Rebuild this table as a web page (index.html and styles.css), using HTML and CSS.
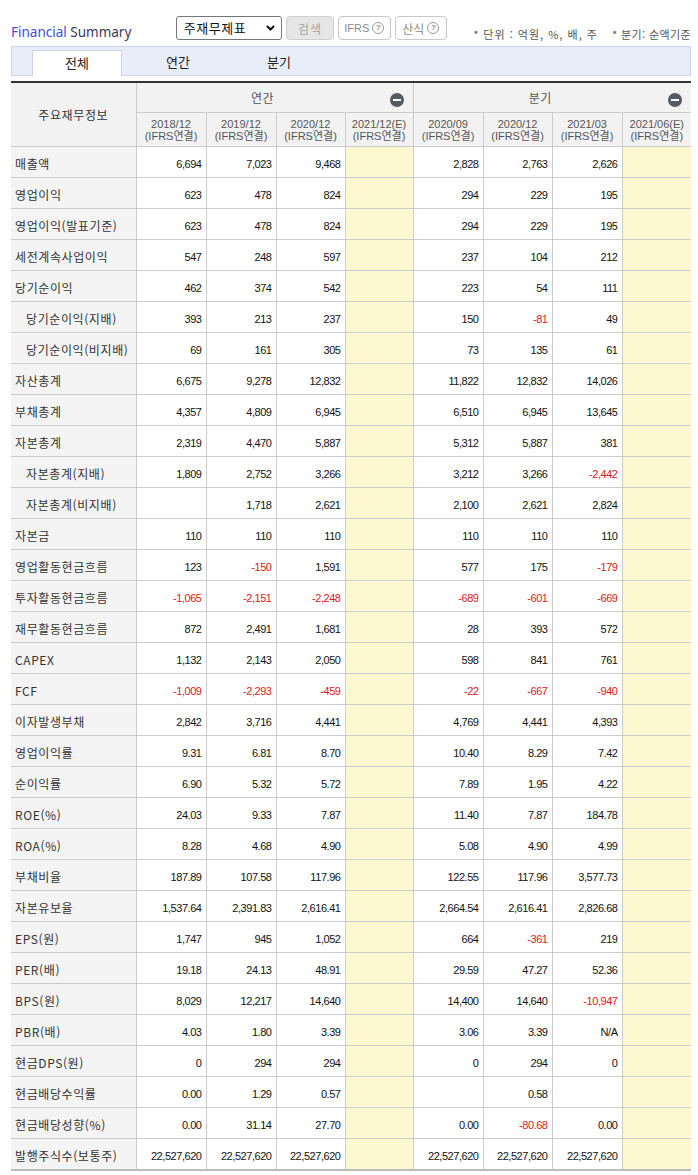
FILE: index.html
```html
<!DOCTYPE html>
<html lang="ko">
<head>
<meta charset="utf-8">
<title>Financial Summary</title>
<link rel="stylesheet" href="styles.css">
</head>
<body>
<div class="wrap">
  <div class="top">
    <h2 class="title"><span class="t-blue">Financial</span> Summary</h2>
    <div class="select">주재무제표<svg class="chev" width="9" height="6" viewBox="0 0 9 6"><polyline points="1,1 4.5,4.5 8,1" fill="none" stroke="#111" stroke-width="2"/></svg></div>
    <button class="btn btn-gray">검색</button>
    <button class="btn btn-w">IFRS <span class="q">?</span></button>
    <button class="btn btn-w btn-ko">산식 <span class="q">?</span></button>
    <span class="unit u1">* 단위 : 억원, %, 배, 주</span>
    <span class="unit u2">* 분기: 순액기준</span>
  </div>

  <div class="tabs">
    <div class="tab on">전체</div>
    <div class="tab">연간</div>
    <div class="tab">분기</div>
  </div>

  <table class="fs">
    <colgroup>
      <col style="width:125px"><col style="width:70px"><col style="width:70px"><col style="width:69px"><col style="width:68px"><col style="width:70px"><col style="width:69px"><col style="width:70px"><col style="width:69px">
    </colgroup>
    <thead>
      <tr class="h1">
        <th rowspan="2" class="hlabel">주요재무정보</th>
        <th colspan="4" class="grp">연간<span class="minus"></span></th>
        <th colspan="4" class="grp">분기<span class="minus"></span></th>
      </tr>
      <tr class="h2">
        <th>2018/12<br>(IFRS연결)</th>
        <th>2019/12<br>(IFRS연결)</th>
        <th>2020/12<br>(IFRS연결)</th>
        <th>2021/12(E)<br>(IFRS연결)</th>
        <th>2020/09<br>(IFRS연결)</th>
        <th>2020/12<br>(IFRS연결)</th>
        <th>2021/03<br>(IFRS연결)</th>
        <th>2021/06(E)<br>(IFRS연결)</th>
      </tr>
    </thead>
    <tbody>
      <tr><th>매출액</th><td>6,694</td><td>7,023</td><td>9,468</td><td class="e"></td><td>2,828</td><td>2,763</td><td>2,626</td><td class="e"></td></tr>
      <tr><th>영업이익</th><td>623</td><td>478</td><td>824</td><td class="e"></td><td>294</td><td>229</td><td>195</td><td class="e"></td></tr>
      <tr><th>영업이익(발표기준)</th><td>623</td><td>478</td><td>824</td><td class="e"></td><td>294</td><td>229</td><td>195</td><td class="e"></td></tr>
      <tr><th>세전계속사업이익</th><td>547</td><td>248</td><td>597</td><td class="e"></td><td>237</td><td>104</td><td>212</td><td class="e"></td></tr>
      <tr><th>당기순이익</th><td>462</td><td>374</td><td>542</td><td class="e"></td><td>223</td><td>54</td><td>111</td><td class="e"></td></tr>
      <tr><th class="sub">당기순이익(지배)</th><td>393</td><td>213</td><td>237</td><td class="e"></td><td>150</td><td class="neg">-81</td><td>49</td><td class="e"></td></tr>
      <tr><th class="sub">당기순이익(비지배)</th><td>69</td><td>161</td><td>305</td><td class="e"></td><td>73</td><td>135</td><td>61</td><td class="e"></td></tr>
      <tr><th>자산총계</th><td>6,675</td><td>9,278</td><td>12,832</td><td class="e"></td><td>11,822</td><td>12,832</td><td>14,026</td><td class="e"></td></tr>
      <tr><th>부채총계</th><td>4,357</td><td>4,809</td><td>6,945</td><td class="e"></td><td>6,510</td><td>6,945</td><td>13,645</td><td class="e"></td></tr>
      <tr><th>자본총계</th><td>2,319</td><td>4,470</td><td>5,887</td><td class="e"></td><td>5,312</td><td>5,887</td><td>381</td><td class="e"></td></tr>
      <tr><th class="sub">자본총계(지배)</th><td>1,809</td><td>2,752</td><td>3,266</td><td class="e"></td><td>3,212</td><td>3,266</td><td class="neg">-2,442</td><td class="e"></td></tr>
      <tr><th class="sub">자본총계(비지배)</th><td></td><td>1,718</td><td>2,621</td><td class="e"></td><td>2,100</td><td>2,621</td><td>2,824</td><td class="e"></td></tr>
      <tr><th>자본금</th><td>110</td><td>110</td><td>110</td><td class="e"></td><td>110</td><td>110</td><td>110</td><td class="e"></td></tr>
      <tr><th>영업활동현금흐름</th><td>123</td><td class="neg">-150</td><td>1,591</td><td class="e"></td><td>577</td><td>175</td><td class="neg">-179</td><td class="e"></td></tr>
      <tr><th>투자활동현금흐름</th><td class="neg">-1,065</td><td class="neg">-2,151</td><td class="neg">-2,248</td><td class="e"></td><td class="neg">-689</td><td class="neg">-601</td><td class="neg">-669</td><td class="e"></td></tr>
      <tr><th>재무활동현금흐름</th><td>872</td><td>2,491</td><td>1,681</td><td class="e"></td><td>28</td><td>393</td><td>572</td><td class="e"></td></tr>
      <tr><th>CAPEX</th><td>1,132</td><td>2,143</td><td>2,050</td><td class="e"></td><td>598</td><td>841</td><td>761</td><td class="e"></td></tr>
      <tr><th>FCF</th><td class="neg">-1,009</td><td class="neg">-2,293</td><td class="neg">-459</td><td class="e"></td><td class="neg">-22</td><td class="neg">-667</td><td class="neg">-940</td><td class="e"></td></tr>
      <tr><th>이자발생부채</th><td>2,842</td><td>3,716</td><td>4,441</td><td class="e"></td><td>4,769</td><td>4,441</td><td>4,393</td><td class="e"></td></tr>
      <tr><th>영업이익률</th><td>9.31</td><td>6.81</td><td>8.70</td><td class="e"></td><td>10.40</td><td>8.29</td><td>7.42</td><td class="e"></td></tr>
      <tr><th>순이익률</th><td>6.90</td><td>5.32</td><td>5.72</td><td class="e"></td><td>7.89</td><td>1.95</td><td>4.22</td><td class="e"></td></tr>
      <tr><th>ROE(%)</th><td>24.03</td><td>9.33</td><td>7.87</td><td class="e"></td><td>11.40</td><td>7.87</td><td>184.78</td><td class="e"></td></tr>
      <tr><th>ROA(%)</th><td>8.28</td><td>4.68</td><td>4.90</td><td class="e"></td><td>5.08</td><td>4.90</td><td>4.99</td><td class="e"></td></tr>
      <tr><th>부채비율</th><td>187.89</td><td>107.58</td><td>117.96</td><td class="e"></td><td>122.55</td><td>117.96</td><td>3,577.73</td><td class="e"></td></tr>
      <tr><th>자본유보율</th><td>1,537.64</td><td>2,391.83</td><td>2,616.41</td><td class="e"></td><td>2,664.54</td><td>2,616.41</td><td>2,826.68</td><td class="e"></td></tr>
      <tr><th>EPS(원)</th><td>1,747</td><td>945</td><td>1,052</td><td class="e"></td><td>664</td><td class="neg">-361</td><td>219</td><td class="e"></td></tr>
      <tr><th>PER(배)</th><td>19.18</td><td>24.13</td><td>48.91</td><td class="e"></td><td>29.59</td><td>47.27</td><td>52.36</td><td class="e"></td></tr>
      <tr><th>BPS(원)</th><td>8,029</td><td>12,217</td><td>14,640</td><td class="e"></td><td>14,400</td><td>14,640</td><td class="neg">-10,947</td><td class="e"></td></tr>
      <tr><th>PBR(배)</th><td>4.03</td><td>1.80</td><td>3.39</td><td class="e"></td><td>3.06</td><td>3.39</td><td>N/A</td><td class="e"></td></tr>
      <tr><th>현금DPS(원)</th><td>0</td><td>294</td><td>294</td><td class="e"></td><td>0</td><td>294</td><td>0</td><td class="e"></td></tr>
      <tr><th>현금배당수익률</th><td>0.00</td><td>1.29</td><td>0.57</td><td class="e"></td><td></td><td>0.58</td><td></td><td class="e"></td></tr>
      <tr><th>현금배당성향(%)</th><td>0.00</td><td>31.14</td><td>27.70</td><td class="e"></td><td>0.00</td><td class="neg">-80.68</td><td>0.00</td><td class="e"></td></tr>
      <tr><th>발행주식수(보통주)</th><td>22,527,620</td><td>22,527,620</td><td>22,527,620</td><td class="e"></td><td>22,527,620</td><td>22,527,620</td><td>22,527,620</td><td class="e"></td></tr>
    </tbody>
  </table>
</div>
</body>
</html>
```

FILE: styles.css
```css
html, body {
  margin: 0;
  padding: 0;
  background: #fff;
}
body {
  font-family: "Liberation Sans", "Noto Sans CJK KR", sans-serif;
  color: #222;
}
.wrap {
  padding-left: 11px;
  width: 680px;
}

/* top bar */
.top {
  display: flex;
  align-items: flex-start;
  height: 46px;
  box-sizing: border-box;
  padding-top: 16px;
}
.title {
  margin: 4px 0 0 0;
  width: 166px;
  font-family: "Noto Sans", "Noto Sans CJK KR", sans-serif;
  font-size: 13.5px;
  font-weight: 400;
  line-height: 24px;
  color: #363a5c;
  letter-spacing: 0;
  white-space: nowrap;
}
.t-blue {
  color: #3d4fd6;
}
.select {
  width: 107px;
  height: 24px;
  box-sizing: border-box;
  border: 1px solid #767676;
  border-radius: 3px;
  padding-left: 7px;
  font-family: "Noto Sans CJK KR", sans-serif;
  font-size: 13px;
  line-height: 22px;
  color: #111;
  display: flex;
  align-items: center;
  justify-content: space-between;
  padding-right: 6px;
  letter-spacing: 0.5px;
}
.chev {
  display: block;
}
.btn {
  margin-left: 4px;
  height: 24px;
  box-sizing: border-box;
  border: 1px solid #c9c9c9;
  border-radius: 4px;
  background: #fff;
  color: #8a8a8a;
  font-family: "Liberation Sans", "Noto Sans CJK KR", sans-serif;
  font-size: 11px;
  padding: 0;
  display: flex;
  align-items: center;
  justify-content: center;
  gap: 3px;
  cursor: pointer;
}
.btn-w {
  width: 53px;
}
.btn-gray {
  width: 48px;
  background: #e6e6e6;
  border-color: #cfcfcf;
  color: #a5a5a5;
  font-size: 12px;
  font-family: "Noto Sans CJK KR", sans-serif;
  letter-spacing: 1px;
}
.btn-ko {
  font-size: 12px;
}
.q {
  display: inline-block;
  width: 12px;
  height: 12px;
  box-sizing: border-box;
  border: 1px solid #9a9a9a;
  border-radius: 50%;
  font-size: 8px;
  line-height: 10px;
  text-align: center;
  color: #8a8a8a;
  font-weight: bold;
  letter-spacing: 0;
}
.unit {
  margin-top: 6px;
  font-family: "Noto Sans CJK KR", sans-serif;
  font-size: 11px;
  line-height: 24px;
  color: #555;
  white-space: nowrap;
}
.u1 {
  margin-left: 26px;
  letter-spacing: 1px;
}
.u2 {
  margin-left: 14px;
  letter-spacing: 0.4px;
}

/* tabs */
.tabs {
  height: 30px;
  box-sizing: border-box;
  border: 1px solid #cbd5e6;
  background: #e8eef9;
  display: flex;
  align-items: flex-end;
  padding-left: 20px;
  gap: 11px;
}
.tab {
  width: 90px;
  height: 25px;
  box-sizing: border-box;
  text-align: center;
  font-family: "Noto Sans CJK KR", sans-serif;
  font-size: 13px;
  line-height: 24px;
  color: #222;
}
.tab.on {
  background: #fff;
  border: 1px solid #cbd5e6;
  border-bottom: none;
  margin-bottom: -1px;
  height: 26px;
}

/* table */
.fs {
  margin-top: 5px;
  width: 680px;
  table-layout: fixed;
  border-collapse: collapse;
  border-top: 2px solid #333;
  border-bottom: 2px solid #bbb;
}
.fs th,
.fs td {
  border: 1px solid #cccccc;
  padding: 0;
}
.fs tr > :first-child {
  border-left: none;
}
.fs tr > :last-child {
  border-right: none;
}
.fs thead th {
  background: #f2f2f2;
  font-weight: normal;
  color: #555;
  text-align: center;
}
.h1 th {
  height: 30px;
}
.grp {
  position: relative;
  font-family: "Noto Sans CJK KR", sans-serif;
  font-size: 12px;
  color: #444;
  padding-right: 24px !important;
  padding-top: 1px !important;
  box-sizing: border-box;
  vertical-align: middle;
  letter-spacing: 0.5px;
}
.minus {
  position: absolute;
  right: 9px;
  bottom: 5px;
  width: 14px;
  height: 14px;
  border-radius: 50%;
  background: #545b64;
}
.minus::after {
  content: "";
  position: absolute;
  left: 3px;
  top: 6px;
  width: 8px;
  height: 2px;
  background: #fff;
}
.hlabel {
  font-family: "Noto Sans CJK KR", sans-serif;
  font-size: 12px;
  color: #333 !important;
  letter-spacing: 0.6px;
}
.h2 th {
  height: 32px;
  font-size: 11px;
  line-height: 12px;
  color: #5a5a5a;
  padding-top: 1px;
  white-space: nowrap;
  overflow: hidden;
}

.fs tbody th {
  background: #f4f4f4;
  font-family: "Noto Sans CJK KR", sans-serif;
  font-size: 12px;
  font-weight: normal;
  color: #333;
  text-align: left;
  padding: 4px 0 0 4px;
  height: 26px;
  line-height: 14px;
  white-space: nowrap;
  letter-spacing: 0.6px;
}
.fs tbody th.sub {
  padding-left: 15px;
}
.fs tbody td {
  font-size: 11px;
  line-height: 14px;
  height: 26px;
  padding: 4px 4px 0 0;
  text-align: right;
  color: #111;
  letter-spacing: -0.45px;
  white-space: nowrap;
}
.fs tbody td.e {
  background: #fdf8d0;
}
.fs tbody td.neg {
  color: #e0161e;
}
```
